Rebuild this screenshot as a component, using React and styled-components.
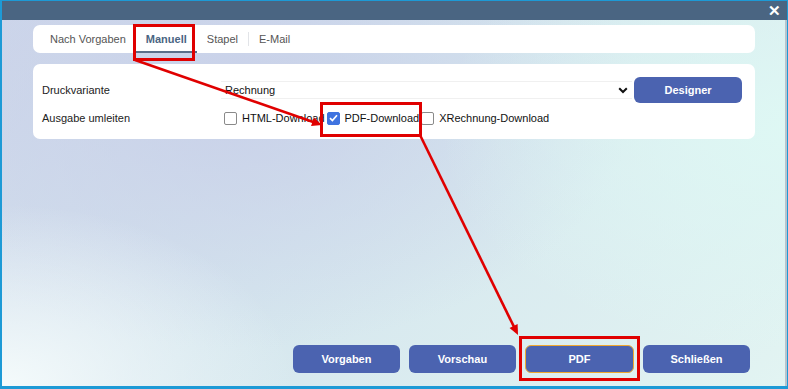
import React from 'react';
import styled, { createGlobalStyle } from 'styled-components';

const GlobalStyle = createGlobalStyle`
  html, body {
    margin: 0;
    padding: 0;
    background: #fff;
  }
  body {
    font-family: "Liberation Sans", Arial, sans-serif;
  }
`;

const Window = styled.div`
  position: relative;
  width: 788px;
  height: 389px;
  box-sizing: border-box;
  border: 1px solid #1d9ad6;
  border-left-width: 2px;
  border-bottom-width: 3px;
  display: flex;
  flex-direction: column;
  overflow: hidden;
`;

const TitleBar = styled.div`
  height: 19px;
  background: #4a6582;
  display: flex;
  justify-content: flex-end;
  align-items: center;
  padding-right: 6px;
`;

const CloseButton = styled.span`
  color: #fff;
  font-weight: bold;
  font-size: 15px;
  line-height: 1;
`;

const Body = styled.div`
  flex: 1;
  display: flex;
  flex-direction: column;
  padding: 5px 31px 13px 31px;
  border-right: 2px solid #b9c3cc;
  background:
    radial-gradient(ellipse 420px 260px at 0% 100%, rgba(246, 252, 252, 0.95), rgba(246, 252, 252, 0) 70%),
    radial-gradient(ellipse 460px 300px at 100% 30%, rgba(222, 248, 244, 0.95), rgba(222, 248, 244, 0) 75%),
    radial-gradient(ellipse 500px 320px at 30% 20%, #c9d1e9, rgba(201, 209, 233, 0) 80%),
    linear-gradient(135deg, #cdd6ea 0%, #d5e6ee 45%, #e2f4f2 100%);
`;

const Card = styled.div`
  background: #fff;
  border-radius: 7px;
  width: 722px;
`;

const TabBar = styled(Card)`
  height: 28px;
  display: flex;
  align-items: stretch;
  padding-left: 7px;
  box-sizing: border-box;
`;

const Tab = styled.div`
  padding: 0 10px;
  display: flex;
  align-items: center;
  font-size: 11px;
  color: ${({ active }) => (active ? '#4a6582' : '#555')};
  font-weight: ${({ active }) => (active ? 'bold' : 'normal')};
  box-shadow: ${({ active }) => (active ? 'inset 0 -2px 0 #5a6e89' : 'none')};
`;

const TabDivider = styled.div`
  width: 1px;
  background: #e2e4e8;
  margin: 7px 0;
`;

const FormCard = styled(Card)`
  margin-top: 11px;
  height: 75px;
  box-sizing: border-box;
  padding: 13px 14px 0 9px;
  display: grid;
  grid-template-columns: 177px 411px 108px;
  grid-template-rows: 26px 30px;
  column-gap: 2px;
  align-items: center;
`;

const Label = styled.div`
  font-size: 11px;
  color: #222;
`;

const Select = styled.div`
  height: 18px;
  border-top: 1px solid #f0f0f0;
  border-bottom: 1px solid #f0f0f0;
  display: flex;
  align-items: center;
  justify-content: space-between;
  padding: 0 4px 0 4px;
  font-size: 11px;
  color: #111;
  box-sizing: border-box;
`;

const Chevron = () => (
  <svg width="10" height="7" viewBox="0 0 10 7">
    <path d="M1.2 1.2 L5 5 L8.8 1.2" fill="none" stroke="#111" strokeWidth="2" />
  </svg>
);

const Button = styled.button`
  height: ${({ tall }) => (tall ? 28 : 26)}px;
  width: ${({ w }) => w || 107}px;
  background: #4b63b0;
  color: #fff;
  border: ${({ highlighted }) => (highlighted ? '1px solid #f0a830' : 'none')};
  border-radius: 6px;
  font-family: "Liberation Sans", Arial, sans-serif;
  font-size: 11px;
  font-weight: bold;
  padding: 0;
`;

const CheckRow = styled.div`
  display: flex;
  align-items: center;
  padding-left: 3px;
  grid-column: 2 / 4;
`;

const CheckItem = styled.label`
  display: flex;
  align-items: center;
  font-size: 11px;
  color: #111;
  margin-right: 2px;
`;

const Box = styled.span`
  width: 11px;
  height: 11px;
  border-radius: 2px;
  border: 1px solid ${({ checked }) => (checked ? '#3f73e0' : '#8a8a8a')};
  background: ${({ checked }) => (checked ? '#3f73e0' : '#fff')};
  margin-right: 5px;
  display: flex;
  align-items: center;
  justify-content: center;
`;

const Tick = () => (
  <svg width="9" height="8" viewBox="0 0 9 8">
    <path d="M1 4.2 L3.4 6.5 L8 1.2" fill="none" stroke="#fff" strokeWidth="1.7" />
  </svg>
);

const Spacer = styled.div`
  flex: 1;
`;

const Footer = styled.div`
  display: flex;
  justify-content: flex-end;
  gap: 9px;
  padding-right: 4px;
`;

const Marker = styled.div`
  position: absolute;
  left: ${({ x }) => x}px;
  top: ${({ y }) => y}px;
  width: ${({ w }) => w}px;
  height: ${({ h }) => h}px;
  box-sizing: border-box;
  border: 3px solid #e00000;
  pointer-events: none;
`;

const Arrows = styled.svg`
  position: absolute;
  left: 0;
  top: 0;
  pointer-events: none;
`;

const Arrow = ({ x1, y1, x2, y2 }) => {
  const a = Math.atan2(y2 - y1, x2 - x1);
  const len = 11;
  const spread = 0.42;
  const p1 = [x2 - len * Math.cos(a - spread), y2 - len * Math.sin(a - spread)];
  const p2 = [x2 - len * Math.cos(a + spread), y2 - len * Math.sin(a + spread)];
  return (
    <g>
      <line x1={x1} y1={y1} x2={x2 - 4 * Math.cos(a)} y2={y2 - 4 * Math.sin(a)} stroke="#e00000" strokeWidth="2.6" />
      <polygon points={`${x2},${y2} ${p1[0]},${p1[1]} ${p2[0]},${p2[1]}`} fill="#e00000" />
    </g>
  );
};

export default function App() {
  return (
    <>
      <GlobalStyle />
      <Window>
        <TitleBar>
          <CloseButton>✕</CloseButton>
        </TitleBar>
        <Body>
          <TabBar>
            <Tab>Nach Vorgaben</Tab>
            <Tab active>Manuell</Tab>
            <Tab>Stapel</Tab>
            <TabDivider />
            <Tab>E-Mail</Tab>
          </TabBar>
          <FormCard>
            <Label>Druckvariante</Label>
            <Select>
              <span>Rechnung</span>
              <Chevron />
            </Select>
            <Button w={108}>Designer</Button>
            <Label>Ausgabe umleiten</Label>
            <CheckRow>
              <CheckItem>
                <Box />
                HTML-Download
              </CheckItem>
              <CheckItem>
                <Box checked>
                  <Tick />
                </Box>
                PDF-Download
              </CheckItem>
              <CheckItem>
                <Box />
                XRechnung-Download
              </CheckItem>
            </CheckRow>
          </FormCard>
          <Spacer />
          <Footer>
            <Button tall>Vorgaben</Button>
            <Button tall>Vorschau</Button>
            <Button tall highlighted w={109}>PDF</Button>
            <Button tall>Schließen</Button>
          </Footer>
        </Body>
        <Marker x={131} y={23} w={62} h={37} />
        <Marker x={318} y={101} w={102} h={35} />
        <Marker x={517} y={335} w={121} h={45} />
        <Arrows width="788" height="389">
          <Arrow x1={133} y1={59} x2={320} y2={124} />
          <Arrow x1={418} y1={134} x2={516} y2={334} />
        </Arrows>
      </Window>
    </>
  );
}
